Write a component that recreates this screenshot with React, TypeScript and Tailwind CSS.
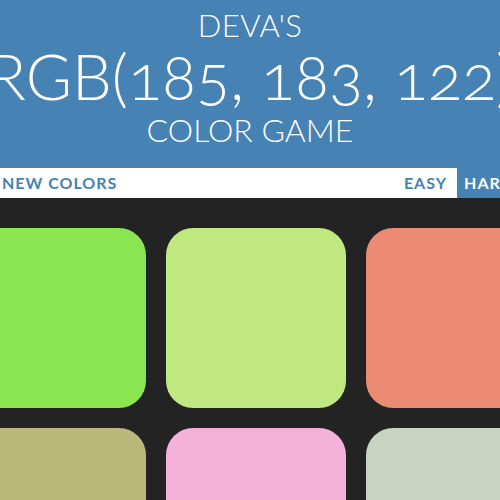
const squares = ["#89e550", "#c0e880", "#ec8b74", "#b9b77a", "#f4b2d8", "#c8d3c2"];

export default function App() {
  return (
    <div className="w-[500px] h-[500px] overflow-hidden bg-[#232323] font-['Lato',sans-serif]">
      <header className="bg-[#4682b4] text-white text-center uppercase font-light pt-[7px] pb-[17px] whitespace-nowrap">
        <div className="text-[31px] leading-[36px] tracking-[0.5px]">Deva's</div>
        <div className="w-[600px] -mx-[50px] text-[63px] leading-[65px] oldstyle-nums">rgb(185, 183, 122)</div>
        <div className="text-[32px] leading-[43px]">Color Game</div>
      </header>

      <nav className="bg-white h-[30px] flex items-center text-[#4682b4] font-bold uppercase text-[16px] leading-[30px] tracking-[1px]">
        <button className="pl-[2px] uppercase">New Colors</button>
        <div className="ml-auto flex shrink-0 -mr-[21px]">
          <button className="px-[10px] uppercase">Easy</button>
          <button className="px-[7px] uppercase bg-[#4682b4] text-white">Hard</button>
        </div>
      </nav>

      <div className="w-[600px] -ml-[34px] mt-[30px] flex flex-wrap gap-5">
        {squares.map((c) => (
          <div key={c} className="w-[180px] h-[180px] rounded-[27px]" style={{ backgroundColor: c }} />
        ))}
      </div>
    </div>
  );
}
